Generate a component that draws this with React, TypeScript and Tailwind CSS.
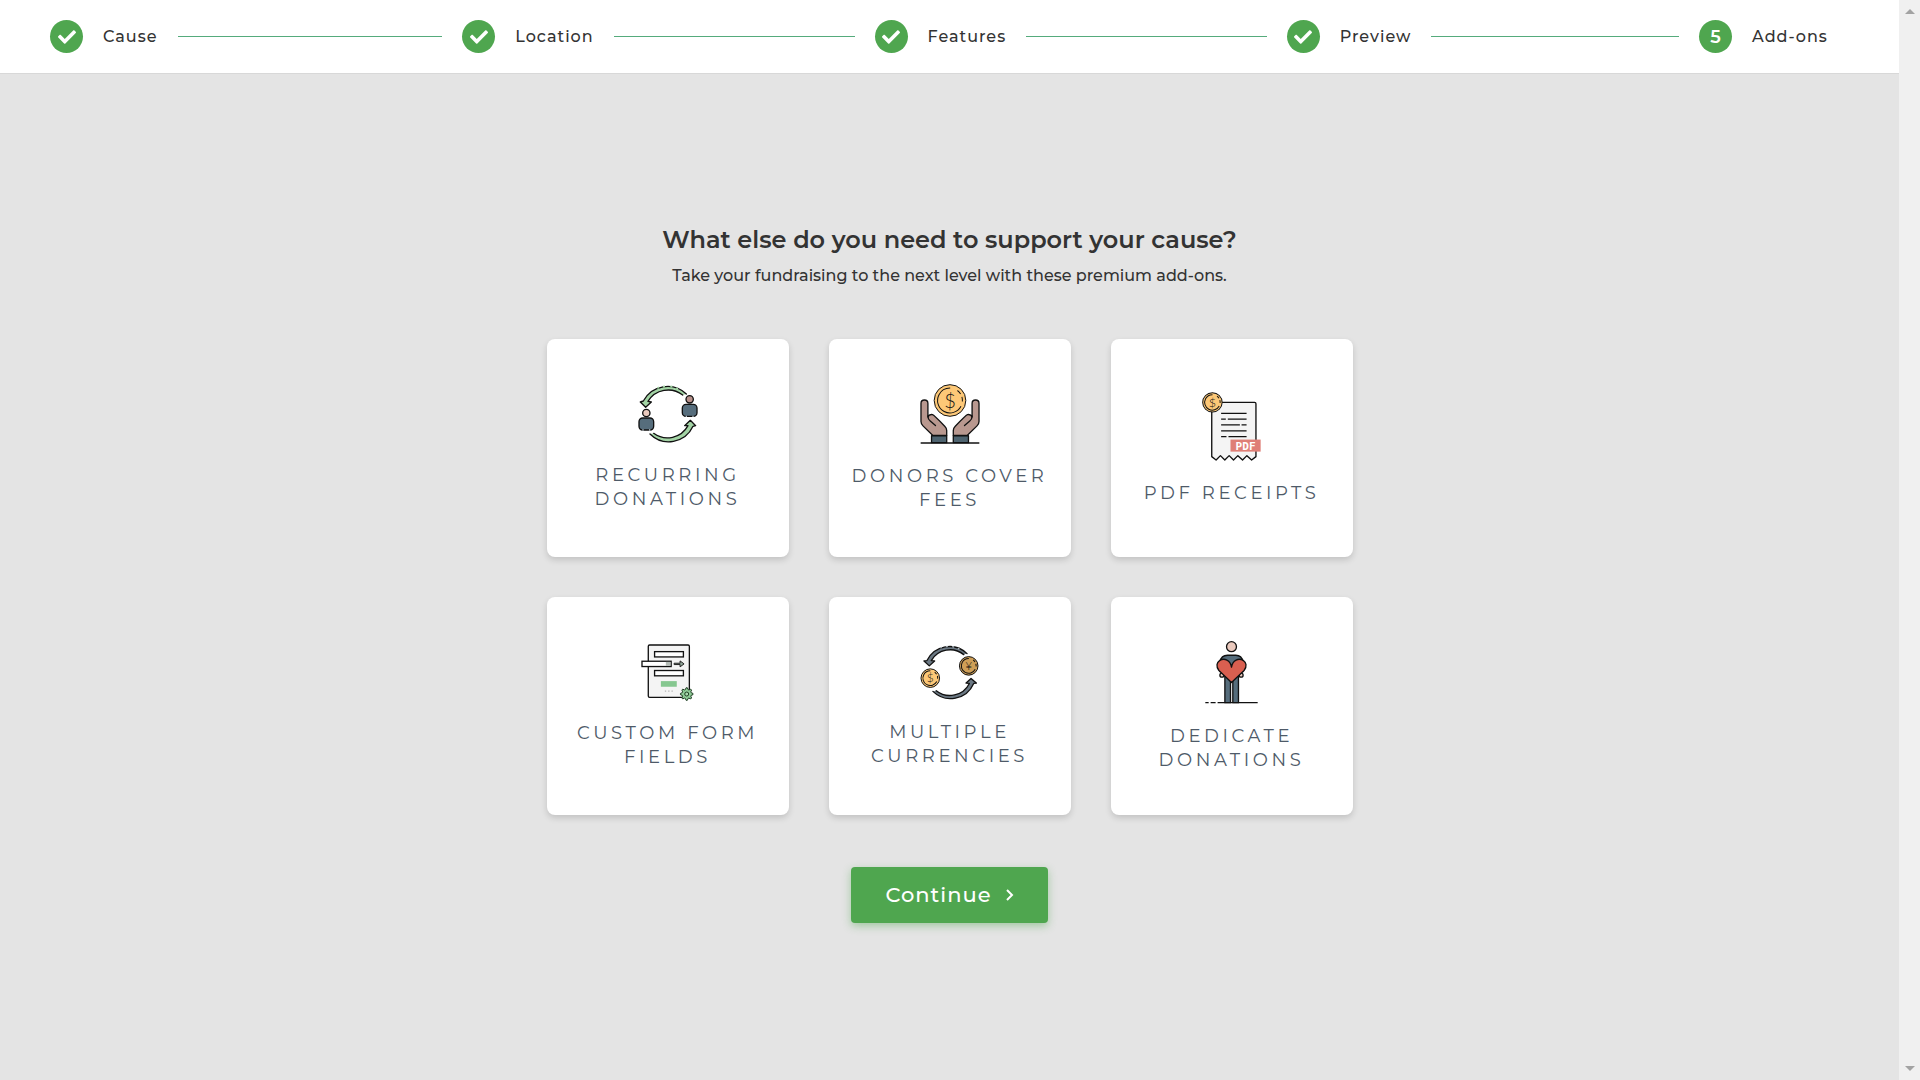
import React, { useState } from 'react';
import { FaCheck } from 'react-icons/fa';

interface CoinProps {
  cx: number;
  cy: number;
  r: number;
  symbol: string;
  fill?: string;
}

const Coin: React.FC<CoinProps> = ({ cx, cy, r, symbol, fill = '#fdc877' }) => {
  const inner = r * 0.77;
  const length = 2 * Math.PI * inner;
  return (
    <g>
      <circle cx={cx} cy={cy} r={r - 1} fill={fill} stroke="#111" strokeWidth="3" />
      <circle
        cx={cx}
        cy={cy}
        r={inner}
        fill="none"
        stroke="#111"
        strokeWidth="3"
        strokeDasharray={`${length * 0.67} ${length * 0.1} ${length * 0.06} ${length * 0.04} ${length * 0.06} ${length * 0.07}`}
        transform={`rotate(28 ${cx} ${cy})`}
      />
      <text
        x={cx}
        y={cy + r * 0.44}
        textAnchor="middle"
        fontSize={r * 1.25}
        fontWeight="300"
        fill="#111"
        className="font-[Lato,sans-serif]"
      >
        {symbol}
      </text>
    </g>
  );
};

const Person: React.FC<{ x: number; y: number; skin: string }> = ({ x, y, skin }) => (
  <g transform={`translate(${x} ${y})`} stroke="#111" strokeWidth="4">
    <circle cx="0" cy="0" r="11" fill={skin} />
    <rect x="-22" y="15" width="44" height="36" rx="11" fill="#566d7c" />
    <path d="M-12 51h4M8 51h4" stroke="#b9c3ca" strokeWidth="4" />
  </g>
);

const RecurringIcon = () => (
  <svg viewBox="322 193 183 174" className="h-[58px] w-[61px]" aria-hidden="true">
    <g fill="#a3d4a5" stroke="#111" strokeWidth="4" strokeLinejoin="round" strokeLinecap="round">
      <path d="M470 220A82 82 0 0 0 341 241L332 244L348 260L365 244L355 242A71 71 0 0 1 459 223" />
      <path d="M361 340A80 80 0 0 0 490 317L498 315L482 299L465 315L475 315A70 70 0 0 1 372 338" />
    </g>
    <path d="M383 203l5-3M400 198l6-1M422 197l6 1M440 202l5 2" stroke="#a3d4a5" strokeWidth="5" />
    <Person x={350} y={277} skin="#eac9bd" />
    <Person x={480} y={236} skin="#b8918b" />
  </svg>
);

const Hand = () => (
  <g stroke="#111" strokeWidth="4" strokeLinejoin="round" strokeLinecap="round">
    <path
      d="M368 347L338 318Q332 312 332 305V250a10.500 10.500 0 0 1 21 0V291Q357 282 367 284Q371 285 404 319Q410 325 410 332V347Z"
      fill="#b9988f"
    />
    <path d="M353 288Q353 298 360 303L376 317" fill="none" />
    <rect x="364" y="348" width="46" height="21" fill="#4f6470" />
  </g>
);

const DonorsIcon = () => (
  <svg viewBox="329 191 182 182" className="h-[60px] w-[60px]" aria-hidden="true">
    <Hand />
    <g transform="translate(840 0) scale(-1 1)">
      <Hand />
    </g>
    <path d="M331 370H509" stroke="#111" strokeWidth="4" />
    <Coin cx={420} cy={241} r={49} symbol="$" />
  </svg>
);

const PdfIcon = () => (
  <svg viewBox="338 215 176 206" className="h-[69px] w-[59px]" aria-hidden="true">
    <path
      d="M367 246H495Q499 246 499 250V408L486 418L472 405L459 418L445 405L432 418L419 405L406 418L393 405L380 418L367 408Z"
      fill="#f4f4f4"
      stroke="#111"
      strokeWidth="4"
      strokeLinejoin="round"
    />
    <path
      d="M395 279H471M395 296H409M415 296H471M395 313H451M456 313H471M395 331H471M395 348H411M417 348H471"
      stroke="#111"
      strokeWidth="4"
    />
    <rect x="423" y="357" width="90" height="36" fill="#df7f76" />
    <text
      x="468"
      y="387"
      textAnchor="middle"
      fontSize="33"
      fontWeight="700"
      fill="#fff"
      className="font-['DejaVu_Sans_Mono',monospace]"
    >
      PDF
    </text>
    <Coin cx={369} cy={246} r={30} symbol="$" />
  </svg>
);

// eight flat teeth around the centre
const gearPoints = Array.from({ length: 32 }, (_, i) => {
  const radius = i % 4 < 2 ? 19 : 14;
  const angle = ((i - 0.5) * Math.PI) / 16;
  return `${471 + radius * Math.cos(angle)},${342 + radius * Math.sin(angle)}`;
}).join(' ');

const FormIcon = () => (
  <svg viewBox="333 191 160 172" className="h-[57px] w-[53px]" aria-hidden="true">
    <g stroke="#111" strokeWidth="4">
      <rect x="355" y="194" width="124" height="158" rx="4" fill="#f4f4f4" />
      <rect x="374" y="214" width="87" height="16" fill="#fff" />
      <rect x="336" y="243" width="88" height="16" fill="#fff" />
      <rect x="374" y="271" width="87" height="16" fill="#fff" />
    </g>
    <rect x="408" y="245" width="14" height="12" fill="#b3bab5" />
    <path d="M433 249H451V242L463 251L451 260V253H433Z" fill="#8fa597" stroke="#222" strokeWidth="3" strokeLinejoin="round" />
    <rect x="393" y="303" width="48" height="17" fill="#86c790" />
    <path d="M405 333h4M415 333h4M425 333h4" stroke="#b5b5b5" strokeWidth="4" />
    <polygon points={gearPoints} fill="#8fcb97" stroke="#1c3a20" strokeWidth="3" strokeLinejoin="round" />
    <circle cx="471" cy="342" r="6" fill="#a9d9ae" stroke="#1c3a20" strokeWidth="3" />
  </svg>
);

const CurrenciesIcon = () => (
  <svg viewBox="330 193 178 166" className="h-[55px] w-[59px]" aria-hidden="true">
    <g fill="#6b7883" stroke="#111" strokeWidth="4" strokeLinejoin="round" strokeLinecap="round">
      <path d="M472 219A76 76 0 0 0 351 240L342 241L358 256L374 241L364 240A66 66 0 0 1 462 222" />
      <path d="M369 333A76 76 0 0 0 492 309L500 308L484 294L469 308L479 309A66 66 0 0 1 379 331" />
    </g>
    <path d="M391 202l5-2M408 198l6-1M427 198l6 1M444 203l5 2" stroke="#aab3ba" strokeWidth="4" />
    <Coin cx={361} cy={293} r={29} symbol="$" />
    <Coin cx={477} cy={256} r={29} symbol="¥" fill="#cf9f57" />
  </svg>
);

const DedicateIcon = () => (
  <svg viewBox="344 181 160 191" className="h-[64px] w-[53px]" aria-hidden="true">
    <g stroke="#111" strokeWidth="4" strokeLinejoin="round">
      <circle cx="424" cy="200" r="15" fill="#eac9bd" />
      <circle cx="395" cy="286" r="6" fill="#eac9bd" />
      <circle cx="453" cy="286" r="6" fill="#eac9bd" />
      <path d="M389 275V246Q393 226 412 226H437Q455 226 459 246V275Z" fill="#566d7c" />
      <rect x="404" y="285" width="17" height="84" fill="#566d7c" />
      <rect x="428" y="285" width="17" height="84" fill="#566d7c" />
      <path
        d="M424 308L386 272C376 259 380 247 388 242C402 233 421 240 424 262C427 240 446 233 460 242C468 247 472 259 462 272Z"
        fill="#d95f50"
      />
      <path d="M345 369H355M361 369H376M382 369H503" fill="none" />
    </g>
  </svg>
);

const steps = ['Cause', 'Location', 'Features', 'Preview', 'Add-ons'];

const addOns = [
  { id: 'recurring', label: 'Recurring Donations', Icon: RecurringIcon },
  { id: 'fees', label: 'Donors Cover Fees', Icon: DonorsIcon },
  { id: 'pdf', label: 'PDF Receipts', Icon: PdfIcon },
  { id: 'fields', label: 'Custom Form Fields', Icon: FormIcon },
  { id: 'currencies', label: 'Multiple Currencies', Icon: CurrenciesIcon },
  { id: 'dedicate', label: 'Dedicate Donations', Icon: DedicateIcon },
];

const Stepper: React.FC<{ current: number }> = ({ current }) => (
  <header className="bg-white px-[50px] py-5 shadow-[0_1px_0_#d8d8d8]">
    <ol className="flex">
      {steps.map((step, i) => {
        const last = i === steps.length - 1;
        return (
          <li key={step} className={last ? 'flex w-[150px] items-center gap-5' : 'flex flex-1 items-center gap-5 pr-5'}>
            <span className="flex size-[33px] shrink-0 items-center justify-center rounded-full bg-[#4fa64f] text-lg font-semibold text-white">
              {i < current ? <FaCheck className="size-[18px]" /> : i + 1}
            </span>
            <span className="text-base font-medium tracking-[1px] whitespace-nowrap">{step}</span>
            {!last && <span className="h-px flex-1 bg-[#55ab7c]" />}
          </li>
        );
      })}
    </ol>
  </header>
);

const ScrollRail = () => (
  <div className="sticky top-0 flex h-screen w-[21px] shrink-0 flex-col items-center justify-between bg-[#f0f0f0] py-[9px]" aria-hidden="true">
    <svg viewBox="0 0 10 5" className="h-[5px] w-[10px]">
      <path d="M0 5L5 0L10 5Z" fill="#a3a3a3" />
    </svg>
    <svg viewBox="0 0 10 5" className="h-[5px] w-[10px]">
      <path d="M0 0L5 5L10 0Z" fill="#a3a3a3" />
    </svg>
  </div>
);

const App: React.FC = () => {
  const [selected, setSelected] = useState<string[]>([]);

  const toggle = (id: string) => {
    setSelected(selected.includes(id) ? selected.filter((s) => s !== id) : [...selected, id]);
  };

  return (
    <div className="flex min-h-screen bg-[#e4e4e4] font-[Montserrat,Inter,sans-serif] text-[#333]">
      <div className="min-w-0 flex-1">
        <Stepper current={4} />
        <main className="flex flex-col items-center px-5 pt-[149px] pb-20">
          <h1 className="text-center text-2xl leading-9 font-semibold">What else do you need to support your cause?</h1>
          <p className="mt-1 text-center text-base leading-7 font-medium">
            Take your fundraising to the next level with these premium add-ons.
          </p>
          <div className="mt-[49px] grid grid-cols-[repeat(3,242px)] gap-10">
            {addOns.map(({ id, label, Icon }) => (
              <button
                key={id}
                type="button"
                aria-pressed={selected.includes(id)}
                onClick={() => toggle(id)}
                className="flex h-[218px] cursor-pointer flex-col items-center justify-center gap-5 rounded-lg bg-white px-4 shadow-[0_3px_6px_rgba(0,0,0,0.15)] aria-pressed:ring-2 aria-pressed:ring-[#4fa64f]"
              >
                <Icon />
                <span className="text-lg leading-6 tracking-[0.2em] text-[#4e5a68] uppercase">{label}</span>
              </button>
            ))}
          </div>
          <button
            type="button"
            className="mt-[52px] flex h-14 w-[197px] cursor-pointer items-center justify-center gap-3.5 rounded bg-[#4fa64f] text-[21px] font-medium tracking-[1px] text-white shadow-[0_3px_8px_rgba(79,166,79,0.45)]"
          >
            Continue
            <svg viewBox="0 0 8 12" className="h-3 w-2" fill="none" stroke="currentColor" strokeWidth="2" aria-hidden="true">
              <path d="M1 1L6 6L1 11" />
            </svg>
          </button>
        </main>
      </div>
      <ScrollRail />
    </div>
  );
};

export default App;
